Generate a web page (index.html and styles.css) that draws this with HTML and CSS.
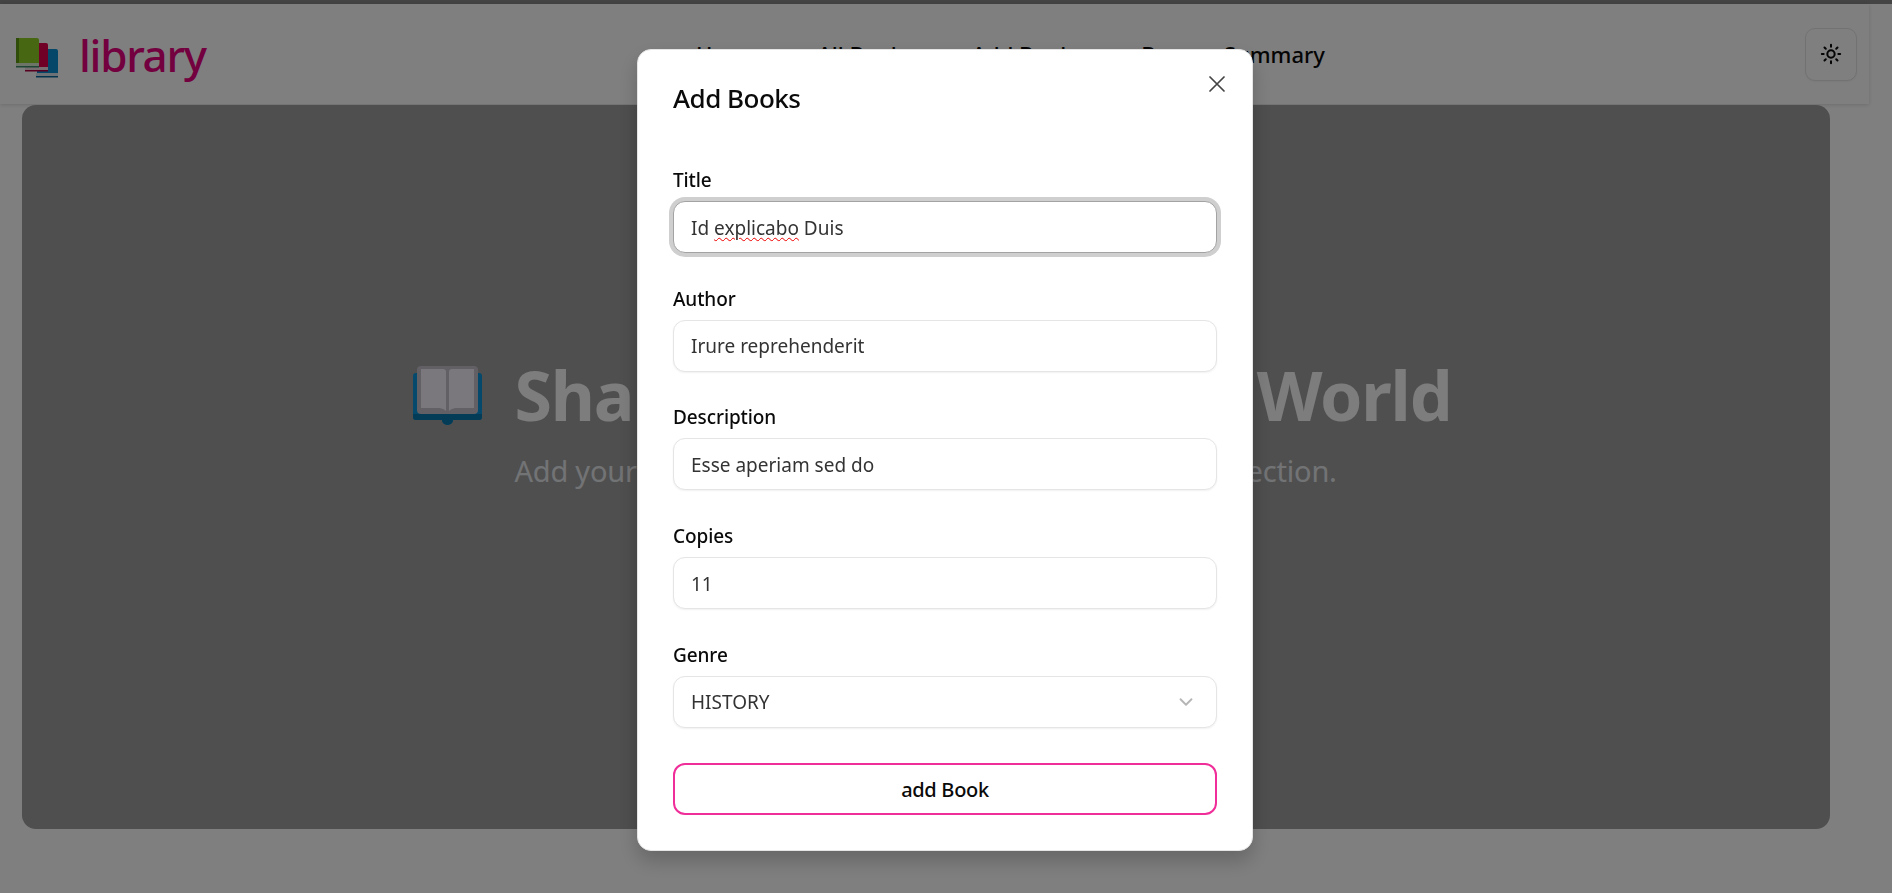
FILE: index.html
```html
<!DOCTYPE html>
<html lang="en">
<head>
<meta charset="utf-8">
<title>library</title>
<link rel="stylesheet" href="styles.css">
</head>
<body>
<div class="tabline"></div>
<header class="navbar">
  <a class="brand">
    <svg class="brand-icon" viewBox="0 0 42 40">
      <rect x="21" y="11" width="21" height="27" rx="2" fill="#0a8fd0"/>
      <rect x="20" y="35" width="22" height="3" fill="#d8e4ea"/>
      <rect x="20" y="38" width="22" height="1.5" fill="#0a6a9c"/>
      <rect x="10" y="5" width="22" height="27" rx="2" fill="#e0004c"/>
      <rect x="9" y="29" width="23" height="3" fill="#f0dce2"/>
      <rect x="9" y="32" width="23" height="1.5" fill="#b00040"/>
      <rect x="0" y="0" width="23" height="28" rx="2" fill="#8fce25"/>
      <rect x="0" y="0" width="3" height="28" fill="#5f9a12"/>
      <rect x="0" y="25" width="23" height="3" fill="#d9ead0"/>
      <rect x="0" y="28" width="23" height="1.5" fill="#3c8a6a"/>
    </svg>
    <span class="brand-name">library</span>
  </a>
  <nav class="nav-links">
    <a>Home</a>
    <a>All Books</a>
    <a>Add Books</a>
    <a>Borrow Summary</a>
  </nav>
  <button class="theme-btn" aria-label="Toggle theme">
    <svg viewBox="0 0 24 24" fill="none" stroke="#0a0a0a" stroke-width="2.2" stroke-linecap="round">
      <circle cx="12" cy="12" r="4"/>
      <path d="M12 2v2M12 20v2M4.9 4.9l1.400 1.400M17.700 17.700l1.400 1.400M2 12h2M20 12h2M6.300 17.700l-1.400 1.400M19.100 4.900l-1.400 1.400"/>
    </svg>
  </button>
</header>
<main class="page">
  <section class="hero">
    <div class="hero-inner">
      <svg class="hero-icon" viewBox="0 0 69 59">
        <path d="M3 7h63a3 3 0 0 1 3 3v41a3 3 0 0 1-3 3H40a5.500 5 0 0 1-11 0H3a3 3 0 0 1-3-3V10a3 3 0 0 1 3-3z" fill="#0a94d8"/>
        <path d="M0 48h69v3a3 3 0 0 1-3 3H40a5.500 5 0 0 1-11 0H3a3 3 0 0 1-3-3z" fill="#0878ae"/>
        <rect x="4" y="0" width="61" height="48" rx="4" fill="#c4bfca"/>
        <path d="M8 3h22a3 3 0 0 1 3 3v39c-3-3-6-3-9-3H8z" fill="#f5f1f9"/>
        <path d="M61 3H39a3 3 0 0 0-3 3v39c3-3 6-3 9-3h16z" fill="#f5f1f9"/>
      </svg>
      <h1 class="hero-title">Share a Book With the World</h1>
      <p class="hero-sub">Add your favorite books to grow our shared library collection.</p>
    </div>
  </section>
</main>
<div class="overlay"></div>
<div class="modal" role="dialog">
  <button class="modal-close" aria-label="Close">
    <svg viewBox="0 0 24 24" fill="none" stroke="#444" stroke-width="1.500" stroke-linecap="round"><path d="M18 6 6 18M6 6l12 12"/></svg>
  </button>
  <h2 class="modal-title">Add Books</h2>
  <form class="form">
    <div class="field">
      <label>Title</label>
      <div class="control focused"><span class="spell">Id <u>explicabo</u> Duis</span></div>
    </div>
    <div class="field">
      <label>Author</label>
      <div class="control">Irure reprehenderit</div>
    </div>
    <div class="field">
      <label>Description</label>
      <div class="control">Esse aperiam sed do</div>
    </div>
    <div class="field">
      <label>Copies</label>
      <div class="control">11</div>
    </div>
    <div class="field">
      <label>Genre</label>
      <div class="control select">HISTORY
        <svg viewBox="0 0 24 24" fill="none" stroke="#b5b5b5" stroke-width="2" stroke-linecap="round" stroke-linejoin="round"><path d="m6 9 6 6 6-6"/></svg>
      </div>
    </div>
    <button class="submit" type="button">add Book</button>
  </form>
</div>
</body>
</html>
```
FILE: styles.css
```css
* { box-sizing: border-box; }
html, body { margin: 0; height: 100%; }
body {
  background: #fff;
  font-family: "Noto Sans", "Open Sans", sans-serif;
  color: #0a0a0a;
  overflow: hidden;
}
.tabline { height: 4px; background: #888; }
.navbar {
  width: 1869px;
  height: 100px;
  display: flex;
  align-items: center;
  padding: 0 12px 0 16px;
  background: #fff;
  box-shadow: 0 1px 4px rgba(0,0,0,.15);
}
.brand { display: flex; align-items: center; gap: 21px; width: 680px; }
.brand-icon { width: 42px; height: 40px; margin-top: 8px; flex: none; }
.brand-name { font-size: 44px; font-weight: 500; color: #e6007e; letter-spacing: -1.3px; line-height: 1; margin-top: 2px; }
.nav-links { display: flex; gap: 58px; font-size: 22px; font-weight: 500; }
.theme-btn {
  margin-left: auto;
  width: 52px; height: 53px;
  background: #fff;
  border: 1px solid #e5e5e5;
  border-radius: 10px;
  box-shadow: 0 1px 2px rgba(0,0,0,.05);
  display: flex; align-items: center; justify-content: center;
  padding: 0;
}
.theme-btn svg { width: 22px; height: 22px; }
.page { padding: 1px 0 0 22px; }
.hero {
  width: 1808px;
  height: 724px;
  background: #9e9e9e;
  border-radius: 14px;
  display: flex; align-items: center; justify-content: center;
  padding: 0 0 91px;
}
.hero-inner { display: grid; grid-template-columns: 69px auto; column-gap: 32px; align-items: center; margin-left: 13px; }
.hero-icon { width: 69px; height: 59px; }
.hero-title { margin: 0; font-size: 68px; font-weight: 700; color: #fafafa; letter-spacing: -1.15px; line-height: 1.3; white-space: nowrap; }
.hero-sub { grid-column: 2; margin: 12px 0 0; font-size: 29px; color: #e5e7eb; line-height: 1.4; letter-spacing: -.2px; white-space: nowrap; }
.overlay { position: fixed; inset: 0; background: rgba(0,0,0,.5); }
.modal {
  position: fixed;
  left: 637px; top: 49px;
  width: 616px; height: 802px;
  background: #fff;
  border: 1px solid #e5e5e5;
  border-radius: 14px;
  box-shadow: 0 10px 20px rgba(0,0,0,.2);
  padding: 30px 35px 0;
}
.modal-close {
  position: absolute; right: 21px; top: 20px;
  width: 28px; height: 28px; padding: 0;
  background: none; border: 0;
}
.modal-close svg { display: block; width: 100%; height: 100%; }
.modal-title { margin: 0; font-size: 26px; font-weight: 500; line-height: 36px; letter-spacing: -.5px; }
.form { display: flex; flex-direction: column; margin-top: 53px; }
.field { display: flex; flex-direction: column; gap: 10px; height: 118.7px; }
.field label { font-size: 19px; font-weight: 500; line-height: 22px; letter-spacing: -.1px; color: #0a0a0a; }
.control {
  flex: none;
  height: 52px;
  display: flex; align-items: center; justify-content: space-between;
  padding: 1px 17px 0;
  border: 1px solid #e5e5e5;
  border-radius: 12px;
  background: #fff;
  box-shadow: 0 1px 2px rgba(0,0,0,.06);
  font-size: 19px;
  color: #333;
}
.control.focused { border-color: #a3a3a3; box-shadow: 0 0 0 4px #cfcfcf; }
.control svg { width: 22px; height: 22px; margin-right: 2px; }
.spell u { text-decoration: underline wavy #e00; text-decoration-thickness: 1px; text-underline-offset: 2px; }
.submit {
  margin-top: 1px;
  height: 52px; width: 100%;
  background: #fff;
  border: 2px solid #f02e9a;
  border-radius: 12px;
  font: 500 20px "Noto Sans", sans-serif;
  letter-spacing: -.3px;
  color: #0a0a0a;
}
```
